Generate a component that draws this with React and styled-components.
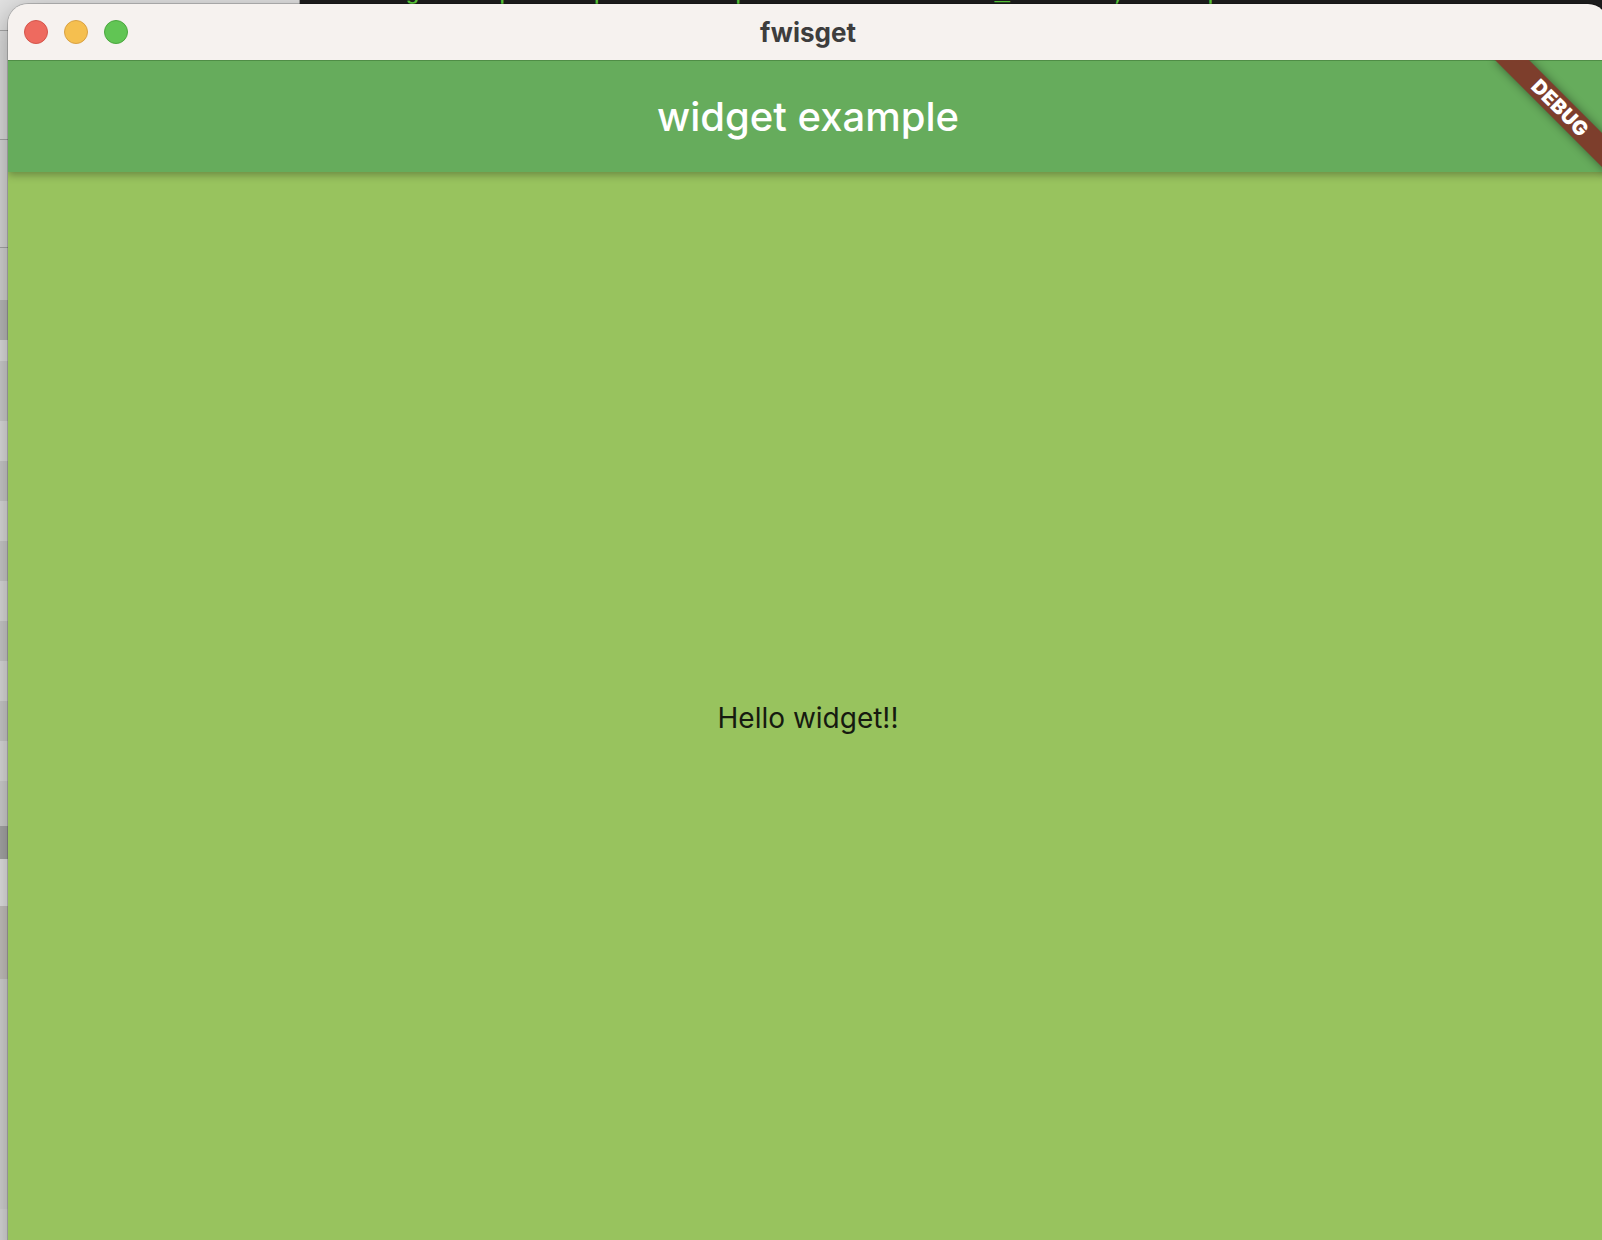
import React from "react";
import styled, { createGlobalStyle } from "styled-components";

const GlobalStyle = createGlobalStyle`
	html,
	body {
		margin: 0;
		padding: 0;
		overflow: hidden;
		background: #d9d9d9;
	}
`;

const Desktop = styled.div`
	position: relative;
	width: 1602px;
	height: 1240px;
	overflow: hidden;
	display: grid;
	grid-template-columns: 300px 1fr;
`;

const SidePane = styled.div`
	display: flex;
	flex-direction: column;
	background: #dcdcdc;
	border-right: 1px solid #9a9a9a;
`;
const Band = styled.div`
	height: ${(p) => p.h}px;
	background: ${(p) => p.color};
	border-bottom: ${(p) => (p.line ? "1px solid #a8a8a8" : "none")};
	flex-shrink: 0;
`;

const Terminal = styled.div`
	background: #1e1e1e;
	overflow: hidden;

	.line {
		margin-top: -21px;
		padding-left: 10px;
		font-family: "Liberation Mono", monospace;
		font-size: 26px;
		line-height: 26px;
		color: #5ccf3a;
		white-space: nowrap;
		letter-spacing: 8px;
	}
`;

// the app window sits over the desktop at its own place
const Window = styled.div`
	position: absolute;
	left: 8px;
	top: 4px;
	width: 1600px;
	height: 1260px;
	display: flex;
	flex-direction: column;
	border-radius: 20px 20px 0 0;
	overflow: hidden;
	box-shadow: 0 0 0 1px rgba(0, 0, 0, 0.18), 0 8px 30px rgba(0, 0, 0, 0.35);
`;

const TitleBar = styled.div`
	height: 56px;
	flex-shrink: 0;
	background: #f6f2ef;
	display: flex;
	align-items: center;
	position: relative;

	.lights {
		display: flex;
		gap: 16px;
		padding-left: 16px;
	}

	.title {
		position: absolute;
		left: 0;
		right: 0;
		text-align: center;
		font-family: Inter, "Liberation Sans", sans-serif;
		font-weight: 700;
		font-size: 26px;
		color: #3d3d3d;
		pointer-events: none;
	}
`;
const Light = styled.span`
	width: 22px;
	height: 22px;
	border-radius: 50%;
	background: ${(p) => p.fill};
	border: 1px solid ${(p) => p.edge};
`;

const Content = styled.div`
	flex-grow: 1;
	display: flex;
	flex-direction: column;
	position: relative;
	overflow: hidden;
	background: #98c35e;
`;

const AppBar = styled.header`
	height: 111px;
	flex-shrink: 0;
	background: #66ac5c;
	border-top: 1px solid #4f8d46;
	display: flex;
	align-items: center;
	justify-content: center;
	box-shadow: 0 3px 8px rgba(0, 0, 0, 0.3);
	z-index: 1;

	h1 {
		margin: 0;
		font-family: Inter, "Liberation Sans", sans-serif;
		font-weight: 500;
		font-size: 40px;
		color: #ffffff;
	}
`;

const Body = styled.main`
	height: 1092px;
	flex-shrink: 0;
	display: flex;
	align-items: center;
	justify-content: center;

	p {
		margin: 0;
		font-family: Inter, "Liberation Sans", sans-serif;
		font-size: 28px;
		color: #161a10;
	}
`;

const Banner = styled.div`
	position: absolute;
	top: 36px;
	right: -32px;
	width: 160px;
	height: 24px;
	transform: rotate(45deg);
	background: #7d3e2c;
	box-shadow: 0 0 10px rgba(0, 0, 0, 0.45);
	color: #ffffff;
	font-family: Inter, "Liberation Sans", sans-serif;
	font-weight: 900;
	font-size: 20px;
	line-height: 24px;
	text-align: center;
	letter-spacing: 0.3px;
	z-index: 2;
`;

const bands = [
	{ h: 30, color: "#e2e2e2", line: true },
	{ h: 108, color: "#dedede", line: true },
	{ h: 107, color: "#dadada", line: true },
	{ h: 52, color: "#d6d6d6" },
	{ h: 40, color: "#bcbcbc" },
	{ h: 21, color: "#e0e0e0" },
	{ h: 60, color: "#d0d0d0" },
	{ h: 40, color: "#e0e0e0" },
	{ h: 40, color: "#cdcdcd" },
	{ h: 40, color: "#dedede" },
	{ h: 40, color: "#cdcdcd" },
	{ h: 40, color: "#dedede" },
	{ h: 40, color: "#cdcdcd" },
	{ h: 40, color: "#dedede" },
	{ h: 40, color: "#cdcdcd" },
	{ h: 40, color: "#dedede" },
	{ h: 45, color: "#d2d2d2" },
	{ h: 33, color: "#a9a9a9" },
	{ h: 47, color: "#e6e6e6" },
	{ h: 73, color: "#c8c4c0" },
	{ h: 230, color: "#d6d6d6" },
];

const App = () => {
	return (
		<Desktop>
			<GlobalStyle />
			<SidePane>
				{bands.map((b, i) => (
					<Band key={i} h={b.h} color={b.color} line={b.line} />
				))}
			</SidePane>
			<Terminal>
				<div className="line">Changed pubspec deps: flutter_test, cupertino 116.8ms</div>
			</Terminal>

			<Window>
				<TitleBar>
					<div className="lights">
						<Light fill="#ee6a5f" edge="#d4554b" />
						<Light fill="#f5bf4f" edge="#d8a144" />
						<Light fill="#61c554" edge="#4ba73f" />
					</div>
					<div className="title">fwisget</div>
				</TitleBar>

				<Content>
					<AppBar>
						<h1>widget example</h1>
					</AppBar>
					<Body>
						<p>Hello widget!!</p>
					</Body>
					<Banner>DEBUG</Banner>
				</Content>
			</Window>
		</Desktop>
	);
};

export default App;
